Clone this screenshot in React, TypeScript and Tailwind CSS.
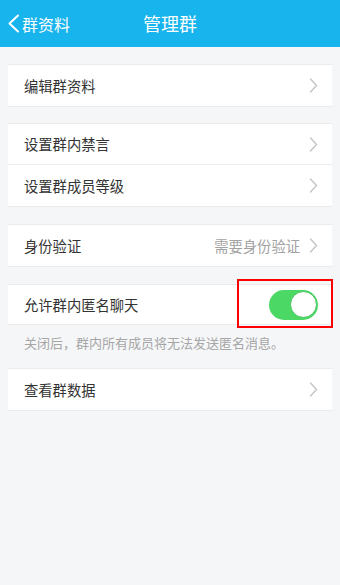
import React from 'react';

const font = { fontFamily: '"Noto Sans CJK SC", "Noto Sans", sans-serif' };

function Chevron() {
  return (
    <svg width="9" height="15" viewBox="0 0 9 15" fill="none" className="shrink-0">
      <path d="M1.5 1 L7.5 7.5 L1.5 14" stroke="#c4c4c8" strokeWidth="1.4" strokeLinecap="round" strokeLinejoin="round" />
    </svg>
  );
}

function Row({ label, value, last = true }: { label: string; value?: string; last?: boolean }) {
  return (
    <div className={`flex h-[41px] items-center pl-4 pr-[14px] ${last ? '' : 'border-b border-[#ededed]'}`}>
      <span className="flex-1 text-[14.3px] text-[#333333]">{label}</span>
      {value && <span className="mr-[9px] text-[14.3px] text-[#a2a2a2]">{value}</span>}
      <Chevron />
    </div>
  );
}

function Card({ children, className = '' }: { children: React.ReactNode; className?: string }) {
  return (
    <div className={`mx-2 border-y border-[#ebebeb] bg-white ${className}`}>{children}</div>
  );
}

export default function App() {
  return (
    <div className="min-h-[585px] w-[340px] bg-[#f5f6f8]" style={font}>
      <header className="relative flex h-[47px] items-center bg-[#18b4ed] text-white">
        <div className="flex items-center pl-[7px]">
          <svg width="13" height="19" viewBox="0 0 13 19" fill="none">
            <path d="M11 1.5 L2.5 9.5 L11 17.5" stroke="white" strokeWidth="2" strokeLinecap="round" strokeLinejoin="round" />
          </svg>
          <span className="ml-[2px] text-[16px]">群资料</span>
        </div>
        <h1 className="absolute left-[143px] top-0 flex h-[47px] items-center text-[18px] font-normal">管理群</h1>
      </header>

      <Card className="mt-[17px]">
        <Row label="编辑群资料" />
      </Card>

      <Card className="mt-4">
        <Row label="设置群内禁言" last={false} />
        <Row label="设置群成员等级" />
      </Card>

      <Card className="mt-[17px]">
        <Row label="身份验证" value="需要身份验证" />
      </Card>

      <Card className="mt-[17px]">
        <div className="relative flex h-[39px] items-center pl-4 pr-[14px]">
          <span className="flex-1 text-[14.3px] text-[#333333]">允许群内匿名聊天</span>
          <div className="flex h-[30px] w-[49px] items-center justify-end rounded-full bg-[#4cd865] p-[1.5px]">
            <div className="h-[27px] w-[27px] rounded-full border border-[#3fc458] bg-white" />
          </div>
          <div className="absolute left-[229px] top-[-6px] h-[49px] w-[96px] border-2 border-[#ff0000]" />
        </div>
      </Card>
      <p className="h-[43px] pl-6 pt-[8px] text-[13px] text-[#a6a6a6]">关闭后，群内所有成员将无法发送匿名消息。</p>

      <Card>
        <Row label="查看群数据" />
      </Card>
    </div>
  );
}
